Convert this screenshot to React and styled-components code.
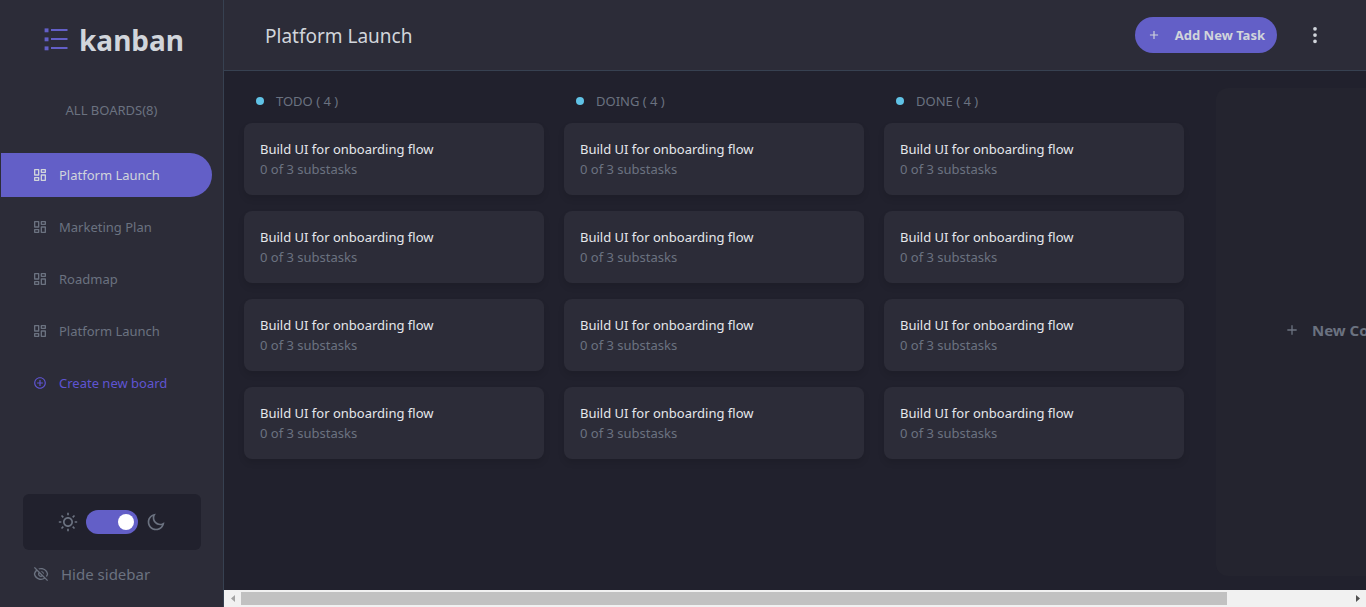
import React, { useState } from 'react';
import styled, { createGlobalStyle, css } from 'styled-components';
import {
  RiAddCircleLine,
  RiAddLine,
  RiDashboardLine,
  RiEyeOffLine,
  RiMoonLine,
  RiSunLine,
} from 'react-icons/ri';
import { BsThreeDotsVertical } from 'react-icons/bs';

const color = {
  surface: '#2c2c38',
  canvas: '#21212d',
  border: '#374151',
  primary: '#635fc7',
  muted: '#6b7280',
  light: '#d1d5db',
};

const GlobalStyle = createGlobalStyle`
  *, *::before, *::after { box-sizing: border-box; }
  body {
    margin: 0;
    background: ${color.canvas};
    color: ${color.muted};
    font-family: "Noto Sans", "Open Sans", sans-serif;
    font-size: 13px;
    line-height: 20px;
  }
  h1, h2, h3, p, ul { margin: 0; padding: 0; font-size: inherit; font-weight: inherit; }
  ul { list-style: none; }
  button { font: inherit; border: 0; padding: 0; background: none; color: inherit; cursor: pointer; }
  a { color: inherit; text-decoration: none; }
  svg { display: block; flex: none; }
`;

const Page = styled.div`
  display: flex;
  height: 100vh;
`;

const Sidebar = styled.aside`
  display: flex;
  flex-direction: column;
  flex: none;
  width: 224px;
  background: ${color.surface};
  border-right: 1px solid ${color.border};
`;

const Brand = styled.div`
  display: flex;
  align-items: center;
  gap: 11px;
  padding: 20px 40px 0 44px;
  color: ${color.light};
  font-size: 28px;
  font-weight: 700;
  line-height: 40px;
`;

const BoardsTitle = styled.h2`
  margin: 40px 0 33px;
  text-align: center;
`;

const Nav = styled.nav`
  display: flex;
  flex-direction: column;
  gap: 8px;
  padding: 0 11px 0 1px;
`;

const navItem = css`
  display: flex;
  align-items: center;
  height: 44px;
  padding-left: 31px;
  gap: 11px;
  border-radius: 0 22px 22px 0;
`;

const BoardLink = styled.a`
  ${navItem}
  background: ${(p) => (p.$active ? color.primary : 'transparent')};
  color: ${(p) => (p.$active ? color.light : color.muted)};
`;

const CreateBoard = styled.button`
  && {
    ${navItem}
    color: #5f54d2;
  }
`;

const IconSlot = styled.span`
  display: flex;
  justify-content: center;
  width: 16px;
`;

const SidebarFooter = styled.div`
  display: flex;
  flex-direction: column;
  gap: 14px;
  margin-top: auto;
  padding: 0 22px 23px 23px;
`;

const ThemePanel = styled.div`
  display: flex;
  align-items: center;
  justify-content: center;
  gap: 8px;
  height: 56px;
  border-radius: 6px;
  background: ${color.canvas};
`;

const Switch = styled.input`
  appearance: none;
  display: flex;
  align-items: center;
  width: 52px;
  height: 24px;
  margin: 0;
  padding: 0 4px;
  border-radius: 12px;
  background: ${color.primary};
  cursor: pointer;

  &::before {
    content: '';
    width: 16px;
    height: 16px;
    border-radius: 50%;
    background: #fff;
  }

  &:checked::before {
    margin-left: auto;
  }
`;

const HideButton = styled.button`
  && {
    display: flex;
    align-items: center;
    gap: 12px;
    padding-left: 10px;
    font-size: 15px;
  }
`;

const Main = styled.main`
  display: flex;
  flex-direction: column;
  flex: 1;
  min-width: 0;
`;

const Header = styled.header`
  display: flex;
  align-items: center;
  flex: none;
  height: 71px;
  padding: 0 41px;
  background: ${color.surface};
  border-bottom: 1px solid ${color.border};
`;

const Title = styled.h1`
  && {
    margin-right: auto;
    padding-top: 2px;
    color: ${color.light};
    font-size: 19px;
    line-height: 28px;
  }
`;

const AddTask = styled.button`
  && {
    display: flex;
    align-items: center;
    gap: 14px;
    height: 36px;
    padding: 0 12px;
    border-radius: 18px;
    background: ${color.primary};
    color: ${color.light};
    font-weight: 700;
  }
`;

const MenuButton = styled.button`
  && {
    margin-left: 28px;
    color: ${color.light};
  }
`;

const Board = styled.section`
  display: flex;
  flex: 1;
  gap: 20px;
  min-height: 0;
  padding: 20px 20px 14px;
  overflow: hidden;
`;

const ColumnBox = styled.div`
  flex: none;
  width: 300px;
`;

const ColumnTitle = styled.h2`
  display: flex;
  align-items: center;
  gap: 12px;
  padding-left: 12px;
  margin-bottom: 12px;

  &::before {
    content: '';
    width: 8px;
    height: 8px;
    border-radius: 50%;
    background: #60c3e6;
  }
`;

const CardList = styled.ul`
  display: flex;
  flex-direction: column;
  gap: 16px;
`;

const Card = styled.li`
  padding: 16px;
  border-radius: 8px;
  background: ${color.surface};
  box-shadow: 0 4px 6px rgba(0, 0, 0, 0.1);
`;

const CardTitle = styled.h3`
  color: #e5e7eb;
`;

const NewColumn = styled.button`
  && {
    display: flex;
    align-items: center;
    flex: none;
    gap: 12px;
    width: 280px;
    margin: -3px 0 0 12px;
    padding: 0 68px 4px;
    border-radius: 12px;
    background: #24242f;
    font-size: 15px;
    font-weight: 700;
    white-space: nowrap;
  }
`;

const ScrollBar = styled.div`
  display: flex;
  flex: none;
  height: 17px;
  background: #f1f1f1;
`;

const ScrollArrow = styled.button`
  && {
    display: flex;
    align-items: center;
    justify-content: center;
    width: 17px;
    color: ${(p) => (p.disabled ? '#a3a3a3' : '#505050')};
  }
`;

const ScrollTrack = styled.div`
  flex: 1;
  padding: 2px 0;
`;

const ScrollThumb = styled.div`
  width: 89%;
  height: 13px;
  background: #c1c1c1;
`;

const boards = ['Platform Launch', 'Marketing Plan', 'Roadmap', 'Platform Launch'];
const columns = ['TODO', 'DOING', 'DONE'];
const tasks = Array.from({ length: 4 }, () => ({
  title: 'Build UI for onboarding flow',
  status: '0 of 3 substasks',
}));

function Logo() {
  return (
    <svg width="24" height="24" viewBox="0 0 24 24" fill={color.primary} aria-hidden="true">
      {[2, 11, 20].map((y) => (
        <g key={y}>
          <rect x="0.6" y={y - 1.6} width="3.9" height="3.9" />
          <rect x="7" y={y - 1} width="16.5" height="2" />
        </g>
      ))}
    </svg>
  );
}

export default function App() {
  const [dark, setDark] = useState(true);
  return (
    <>
      <GlobalStyle />
      <Page>
        <Sidebar>
          <Brand>
            <Logo />
            kanban
          </Brand>
          <BoardsTitle>ALL BOARDS(8)</BoardsTitle>
          <Nav>
            {boards.map((name, i) => (
              <BoardLink key={i} href="#" $active={i === 0}>
                <RiDashboardLine size={16} />
                {name}
              </BoardLink>
            ))}
            <CreateBoard type="button">
              <IconSlot>
                <RiAddCircleLine size={14} />
              </IconSlot>
              Create new board
            </CreateBoard>
          </Nav>
          <SidebarFooter>
            <ThemePanel>
              <RiSunLine size={20} />
              <Switch
                type="checkbox"
                role="switch"
                aria-label="Dark theme"
                checked={dark}
                onChange={(e) => setDark(e.target.checked)}
              />
              <RiMoonLine size={20} />
            </ThemePanel>
            <HideButton type="button">
              <RiEyeOffLine size={16} />
              Hide sidebar
            </HideButton>
          </SidebarFooter>
        </Sidebar>
        <Main>
          <Header>
            <Title>Platform Launch</Title>
            <AddTask type="button">
              <RiAddLine size={14} />
              Add New Task
            </AddTask>
            <MenuButton type="button" aria-label="Board menu">
              <BsThreeDotsVertical size={20} />
            </MenuButton>
          </Header>
          <Board>
            {columns.map((name) => (
              <ColumnBox key={name}>
                <ColumnTitle>{`${name} ( ${tasks.length} )`}</ColumnTitle>
                <CardList>
                  {tasks.map((task, i) => (
                    <Card key={i}>
                      <CardTitle>{task.title}</CardTitle>
                      <p>{task.status}</p>
                    </Card>
                  ))}
                </CardList>
              </ColumnBox>
            ))}
            <NewColumn type="button">
              <RiAddLine size={16} />
              New Column
            </NewColumn>
          </Board>
          <ScrollBar>
            <ScrollArrow type="button" aria-label="Scroll left" disabled>
              <svg width="4" height="7" viewBox="0 0 4 7" fill="currentColor">
                <path d="M4 0v7L0 3.5z" />
              </svg>
            </ScrollArrow>
            <ScrollTrack>
              <ScrollThumb />
            </ScrollTrack>
            <ScrollArrow type="button" aria-label="Scroll right">
              <svg width="4" height="7" viewBox="0 0 4 7" fill="currentColor">
                <path d="M0 0v7l4-3.5z" />
              </svg>
            </ScrollArrow>
          </ScrollBar>
        </Main>
      </Page>
    </>
  );
}
